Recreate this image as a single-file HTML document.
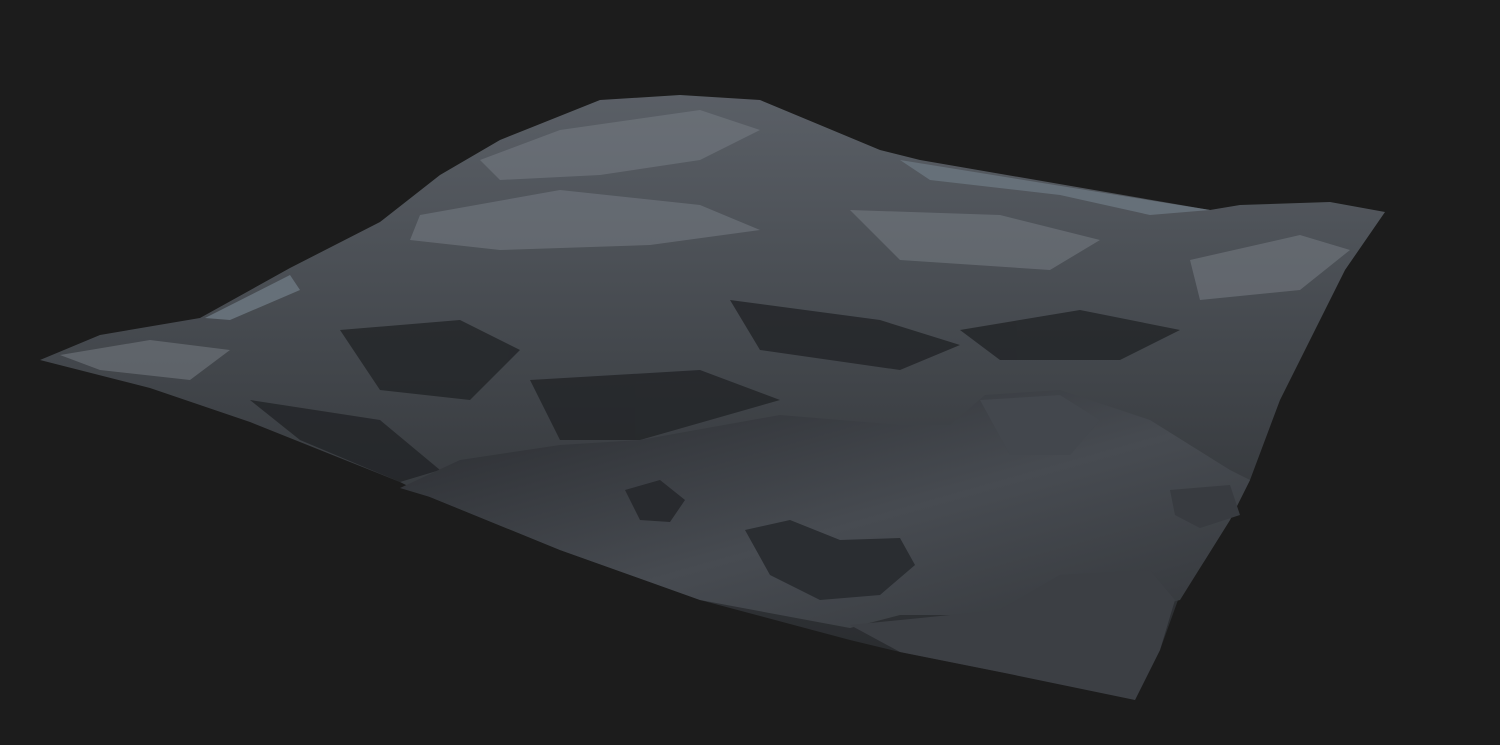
<!DOCTYPE html>
<html><head><meta charset="utf-8"><style>
html,body{margin:0;padding:0;background:#1c1c1c;width:1500px;height:745px;overflow:hidden}
svg{display:block}
</style></head><body>
<svg width="1500" height="745" viewBox="0 0 1500 745" xmlns="http://www.w3.org/2000/svg">
<defs>
<linearGradient id="rock" x1="0" y1="0" x2="0" y2="1">
<stop offset="0" stop-color="#5a5f66"/>
<stop offset="0.45" stop-color="#42464b"/>
<stop offset="1" stop-color="#26282b"/>
</linearGradient>
<linearGradient id="water" x1="0" y1="0" x2="1" y2="1">
<stop offset="0" stop-color="#282a2e"/>
<stop offset="0.55" stop-color="#474b51"/>
<stop offset="1" stop-color="#34373b"/>
</linearGradient>
</defs>
<path d="M40,360 L100,335 L200,318 L290,268 L380,222 L440,175 L500,140 L600,100 L680,95 L760,100 L820,125 L880,150 L920,160 L1210,210 L1240,205 L1330,202 L1385,212 L1345,270 L1310,340 L1280,400 L1250,480 L1230,520 L1205,560 L1178,600 L1160,650 L1135,700 L1100,690 L1000,672 L900,652 L850,640 L700,600 L560,550 L430,497 L400,482 L350,462 L250,422 L150,388 Z" fill="url(#rock)"/>
<g fill="#222427" opacity="0.8">
<path d="M340,330 L460,320 L520,350 L470,400 L380,390 Z"/>
<path d="M730,300 L880,320 L960,345 L900,370 L760,350 Z"/>
<path d="M960,330 L1080,310 L1180,330 L1120,360 L1000,360 Z"/>
<path d="M530,380 L700,370 L780,400 L640,440 L560,440 Z"/>
<path d="M250,400 L380,420 L440,470 L400,482 L300,440 Z"/>
</g>
<g fill="#767c84" opacity="0.55">
<path d="M480,160 L560,130 L700,110 L760,130 L700,160 L600,175 L500,180 Z"/>
<path d="M420,215 L560,190 L700,205 L760,230 L650,245 L500,250 L410,240 Z"/>
<path d="M850,210 L1000,215 L1100,240 L1050,270 L900,260 Z"/>
<path d="M1190,260 L1300,235 L1350,250 L1300,290 L1200,300 Z"/>
<path d="M60,355 L150,340 L230,350 L190,380 L100,370 Z"/>
</g>
<path d="M400,488 L460,460 L560,445 L640,440 L780,415 L900,425 L950,425 L985,395 L1060,390 L1150,420 L1230,470 L1250,480 L1230,520 L1205,560 L1180,600 L1140,610 L1060,600 L1000,615 L900,615 L850,628 L700,600 L560,550 L430,497 Z" fill="url(#water)"/>
<path d="M900,160 L1210,210 L1150,215 L1060,195 L930,180 Z" fill="#667079"/>
<path d="M205,318 L290,275 L300,290 L230,320 Z" fill="#667079"/>
<path d="M745,530 L790,520 L840,540 L900,538 L915,565 L880,595 L820,600 L770,575 Z" fill="#2a2d31"/>
<path d="M625,490 L660,480 L685,500 L670,522 L640,520 Z" fill="#282a2e"/>
<path d="M980,400 L1060,395 L1100,420 L1070,455 L1010,455 Z" fill="#43474d"/>
<path d="M1170,490 L1230,485 L1240,515 L1200,528 L1175,515 Z" fill="#383b40"/>
<path d="M850,625 L1000,610 L1060,575 L1150,570 L1175,600 L1160,650 L1135,700 L1000,672 L900,652 Z" fill="#3c3f44"/>
</svg>
</body></html>
